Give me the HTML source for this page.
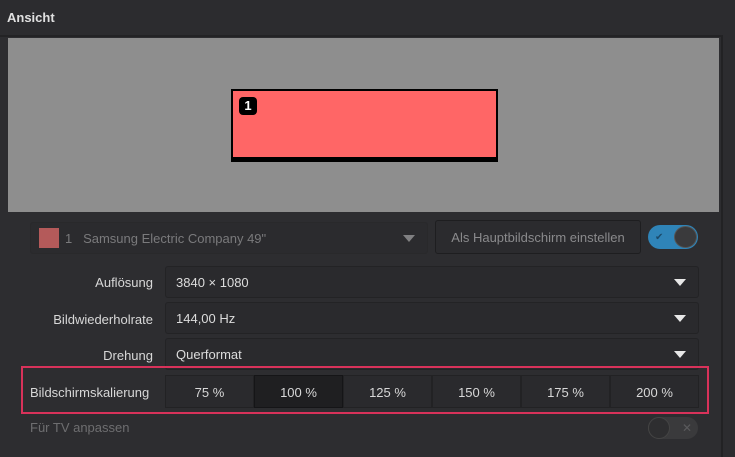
<!DOCTYPE html>
<html><head><meta charset="utf-8"><style>
*{box-sizing:border-box;margin:0;padding:0}
body{width:735px;height:457px;background:#2c2c2f;font-family:"Liberation Sans","DejaVu Sans",sans-serif;font-size:13px;color:#dcdcdc;position:relative;overflow:hidden}
.a{position:absolute}
.dd{position:absolute;background:#2a2a2d;border:1px solid #232325;border-radius:3px}
.arrow{position:absolute;right:12px;top:50%;margin-top:-3px;width:0;height:0;border-left:6px solid transparent;border-right:6px solid transparent;border-top:7px solid #e8e8e8}
.lbl{position:absolute;right:582px;text-align:right;color:#d8d8d8}
.seg{position:absolute;top:375px;height:33px;width:89px;background:#2a2a2d;border:1px solid #222224;text-align:center;line-height:33px;color:#d8d8d8}
</style></head><body>
<div class="a" style="left:7px;top:10px;font-weight:bold;color:#e0e0e0;font-size:13px">Ansicht</div>
<div class="a" style="left:0;top:35px;width:723px;height:422px;background:#2d2d30;border-top:2px solid #232325;border-right:2px solid #222224"></div>
<div class="a" style="left:8px;top:38px;width:711px;height:174px;background:#8e8e8e"></div>
<div class="a" style="left:231px;top:89px;width:267px;height:73px;background:#ff6666;border:2px solid #000;border-bottom-width:5px"></div>
<div class="a" style="left:239px;top:97px;width:18px;height:18px;background:#000;border-radius:4px;color:#fff;font-weight:bold;font-size:13px;text-align:center;line-height:18px">1</div>

<div class="dd" style="left:30px;top:222px;width:398px;height:32px;border-color:#29292b;background:#2b2b2e">
<div class="a" style="left:8px;top:5px;width:20px;height:20px;background:#b45a5a"></div>
<div class="a" style="left:34px;top:8px;color:#7a7a7c">1 &nbsp;&nbsp;Samsung Electric Company 49"</div>
<div class="arrow" style="border-top-color:#808082"></div></div>
<div class="dd" style="left:435px;top:220px;width:206px;height:34px;background:#2b2b2e;border-color:#1e1e20;color:#8a8a8c;text-align:center;line-height:34px">Als Hauptbildschirm einstellen</div>
<div class="a" style="left:648px;top:225px;width:50px;height:24px;border-radius:12px;background:#2f84b8"></div>
<div class="a" style="left:674px;top:226px;width:23px;height:22px;border-radius:50%;background:#3a3a3c;border:1px solid #555"></div>
<div class="a" style="left:655px;top:232px;color:#1b4a6a;font-size:10px">✔</div>

<div class="lbl" style="top:275px">Auflösung</div>
<div class="dd" style="left:165px;top:266px;width:534px;height:32px"><div class="a" style="left:10px;top:8px">3840 × 1080</div><div class="arrow"></div></div>
<div class="lbl" style="top:312px">Bildwiederholrate</div>
<div class="dd" style="left:165px;top:302px;width:534px;height:32px"><div class="a" style="left:10px;top:8px">144,00 Hz</div><div class="arrow"></div></div>
<div class="lbl" style="top:348px">Drehung</div>
<div class="dd" style="left:165px;top:338px;width:534px;height:32px"><div class="a" style="left:10px;top:8px">Querformat</div><div class="arrow"></div></div>

<div class="a" style="left:21px;top:366px;width:688px;height:48px;border:2px solid #d8325a"></div>
<div class="a" style="left:30px;top:385px;color:#d8d8d8">Bildschirmskalierung</div>
<div class="seg" style="left:165px">75 %</div>
<div class="seg" style="left:254px;background:#1f1f21;border-color:#151517">100 %</div>
<div class="seg" style="left:343px">125 %</div>
<div class="seg" style="left:432px">150 %</div>
<div class="seg" style="left:521px">175 %</div>
<div class="seg" style="left:610px">200 %</div>

<div class="a" style="left:30px;top:420px;color:#6e6e70">Für TV anpassen</div>
<div class="a" style="left:648px;top:417px;width:50px;height:22px;border-radius:11px;background:#3a3a3c"></div>
<div class="a" style="left:648px;top:417px;width:22px;height:22px;border-radius:50%;background:#2e2e30;border:1px solid #444"></div>
<div class="a" style="left:682px;top:421px;color:#5a5a5c;font-size:12px">✕</div>
</body></html>
